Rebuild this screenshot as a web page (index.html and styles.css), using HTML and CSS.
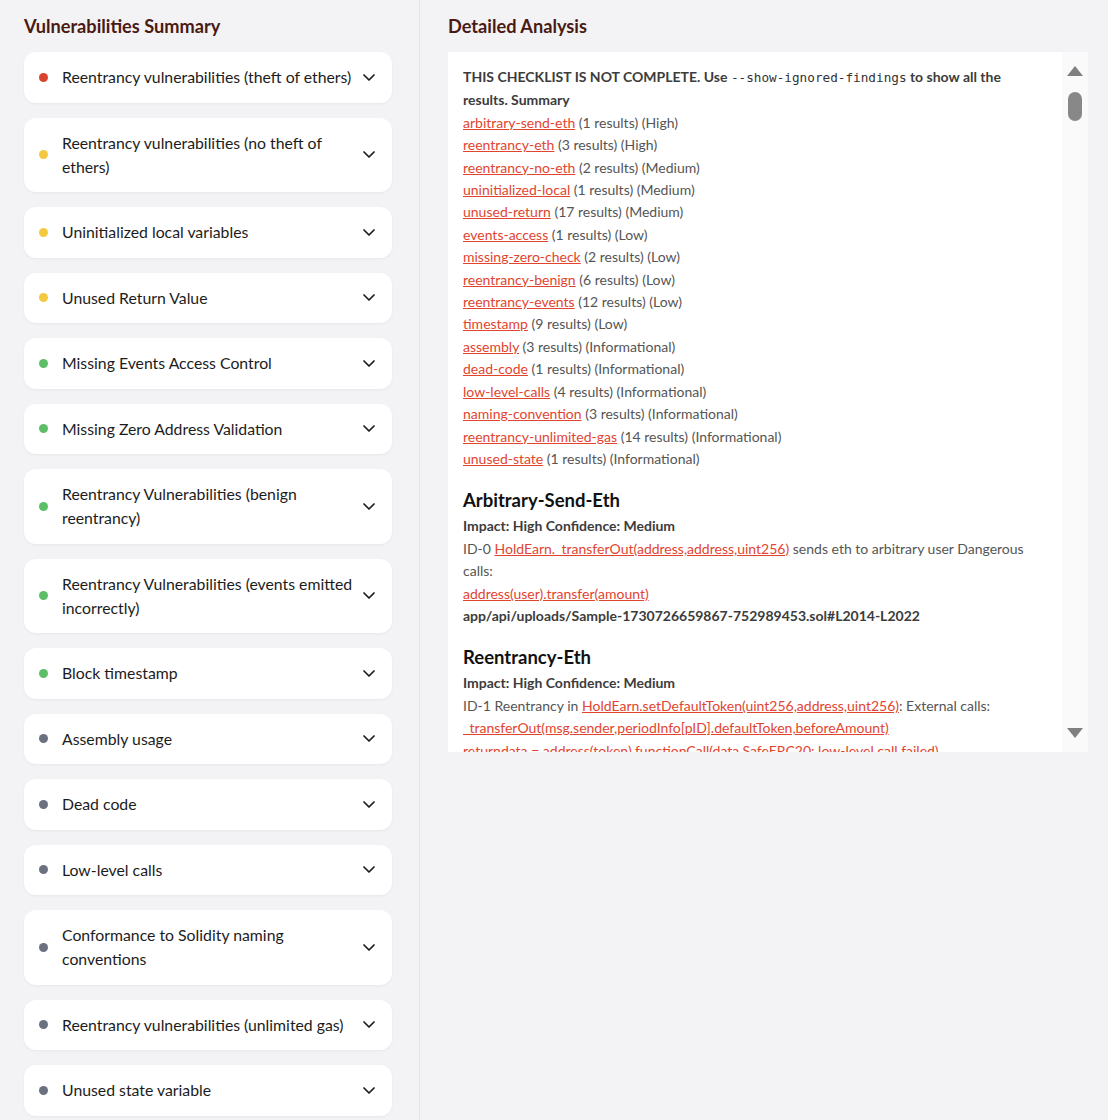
FILE: index.html
```html
<!DOCTYPE html>
<html lang="en">
<head>
<meta charset="utf-8">
<title>Analysis</title>
<link rel="stylesheet" href="styles.css">
</head>
<body>
<div class="page">
  <aside class="summary-col">
    <h2 class="col-title">Vulnerabilities Summary</h2>
    <div class="cards">
      <div class="card"><span class="dot red"></span><span class="card-text">Reentrancy vulnerabilities (theft of ethers)</span><svg class="chev" viewBox="0 0 12 7"><polyline points="1,1 6,6 11,1"/></svg></div>
      <div class="card"><span class="dot yellow"></span><span class="card-text">Reentrancy vulnerabilities (no theft of ethers)</span><svg class="chev" viewBox="0 0 12 7"><polyline points="1,1 6,6 11,1"/></svg></div>
      <div class="card"><span class="dot yellow"></span><span class="card-text">Uninitialized local variables</span><svg class="chev" viewBox="0 0 12 7"><polyline points="1,1 6,6 11,1"/></svg></div>
      <div class="card"><span class="dot yellow"></span><span class="card-text">Unused Return Value</span><svg class="chev" viewBox="0 0 12 7"><polyline points="1,1 6,6 11,1"/></svg></div>
      <div class="card"><span class="dot green"></span><span class="card-text">Missing Events Access Control</span><svg class="chev" viewBox="0 0 12 7"><polyline points="1,1 6,6 11,1"/></svg></div>
      <div class="card"><span class="dot green"></span><span class="card-text">Missing Zero Address Validation</span><svg class="chev" viewBox="0 0 12 7"><polyline points="1,1 6,6 11,1"/></svg></div>
      <div class="card"><span class="dot green"></span><span class="card-text">Reentrancy Vulnerabilities (benign reentrancy)</span><svg class="chev" viewBox="0 0 12 7"><polyline points="1,1 6,6 11,1"/></svg></div>
      <div class="card"><span class="dot green"></span><span class="card-text">Reentrancy Vulnerabilities (events emitted incorrectly)</span><svg class="chev" viewBox="0 0 12 7"><polyline points="1,1 6,6 11,1"/></svg></div>
      <div class="card"><span class="dot green"></span><span class="card-text">Block timestamp</span><svg class="chev" viewBox="0 0 12 7"><polyline points="1,1 6,6 11,1"/></svg></div>
      <div class="card"><span class="dot gray"></span><span class="card-text">Assembly usage</span><svg class="chev" viewBox="0 0 12 7"><polyline points="1,1 6,6 11,1"/></svg></div>
      <div class="card"><span class="dot gray"></span><span class="card-text">Dead code</span><svg class="chev" viewBox="0 0 12 7"><polyline points="1,1 6,6 11,1"/></svg></div>
      <div class="card"><span class="dot gray"></span><span class="card-text">Low-level calls</span><svg class="chev" viewBox="0 0 12 7"><polyline points="1,1 6,6 11,1"/></svg></div>
      <div class="card"><span class="dot gray"></span><span class="card-text">Conformance to Solidity naming conventions</span><svg class="chev" viewBox="0 0 12 7"><polyline points="1,1 6,6 11,1"/></svg></div>
      <div class="card"><span class="dot gray"></span><span class="card-text">Reentrancy vulnerabilities (unlimited gas)</span><svg class="chev" viewBox="0 0 12 7"><polyline points="1,1 6,6 11,1"/></svg></div>
      <div class="card"><span class="dot gray"></span><span class="card-text">Unused state variable</span><svg class="chev" viewBox="0 0 12 7"><polyline points="1,1 6,6 11,1"/></svg></div>
    </div>
  </aside>

  <main class="detail-col">
    <h2 class="col-title">Detailed Analysis</h2>
    <div class="panel">
      <div class="panel-body">
        <p class="intro">THIS CHECKLIST IS NOT COMPLETE. Use <code>--show-ignored-findings</code> to show all the results. Summary</p>
        <ul class="summary-list">
          <li><a href="#">arbitrary-send-eth</a> (1 results) (High)</li>
          <li><a href="#">reentrancy-eth</a> (3 results) (High)</li>
          <li><a href="#">reentrancy-no-eth</a> (2 results) (Medium)</li>
          <li><a href="#">uninitialized-local</a> (1 results) (Medium)</li>
          <li><a href="#">unused-return</a> (17 results) (Medium)</li>
          <li><a href="#">events-access</a> (1 results) (Low)</li>
          <li><a href="#">missing-zero-check</a> (2 results) (Low)</li>
          <li><a href="#">reentrancy-benign</a> (6 results) (Low)</li>
          <li><a href="#">reentrancy-events</a> (12 results) (Low)</li>
          <li><a href="#">timestamp</a> (9 results) (Low)</li>
          <li><a href="#">assembly</a> (3 results) (Informational)</li>
          <li><a href="#">dead-code</a> (1 results) (Informational)</li>
          <li><a href="#">low-level-calls</a> (4 results) (Informational)</li>
          <li><a href="#">naming-convention</a> (3 results) (Informational)</li>
          <li><a href="#">reentrancy-unlimited-gas</a> (14 results) (Informational)</li>
          <li><a href="#">unused-state</a> (1 results) (Informational)</li>
        </ul>

        <section class="finding">
          <h3>Arbitrary-Send-Eth</h3>
          <p class="impact">Impact: High Confidence: Medium</p>
          <p>ID-0 <a href="#">HoldEarn._transferOut(address,address,uint256)</a> sends eth to arbitrary user Dangerous calls:</p>
          <p><a href="#">address(user).transfer(amount)</a></p>
          <p class="path">app/api/uploads/Sample-1730726659867-752989453.sol#L2014-L2022</p>
        </section>

        <section class="finding">
          <h3>Reentrancy-Eth</h3>
          <p class="impact">Impact: High Confidence: Medium</p>
          <p>ID-1 Reentrancy in <a href="#">HoldEarn.setDefaultToken(uint256,address,uint256)</a>: External calls:</p>
          <p><a href="#">_transferOut(msg.sender,periodInfo[pID].defaultToken,beforeAmount)</a></p>
          <p><a href="#">returndata = address(token).functionCall(data,SafeERC20: low-level call failed)</a></p>
        </section>
      </div>
      <div class="scrollbar">
        <span class="arrow up"></span>
        <span class="thumb"></span>
        <span class="track-fill"></span>
        <span class="arrow down"></span>
      </div>
    </div>
  </main>
</div>
</body>
</html>
```

FILE: styles.css
```css
* { box-sizing: border-box; }

html, body {
  margin: 0;
  padding: 0;
  background: #f3f3f6;
  font-family: Lato, "Noto Sans", sans-serif;
  color: #1c1c1c;
}

.page {
  display: flex;
  height: 1120px;
  overflow: hidden;
}

.summary-col {
  width: 420px;
  flex: none;
  border-right: 1px solid #e3e3e8;
  padding: 16px 27px 0 24px;
}

.col-title {
  margin: 0 0 16px;
  font-size: 18.2px;
  line-height: 20px;
  font-weight: 700;
  color: #4a1a12;
}

.cards {
  display: flex;
  flex-direction: column;
  gap: 15px;
}

.card {
  display: flex;
  align-items: center;
  background: #fff;
  border-radius: 12px;
  padding: 13.25px 17px 13.25px 15px;
  box-shadow: 0 1px 3px rgba(20, 20, 40, 0.05);
}

.dot {
  flex: none;
  width: 9px;
  height: 9px;
  border-radius: 50%;
  margin-right: 14px;
}
.dot.red { background: #d9432e; }
.dot.yellow { background: #f4c93f; }
.dot.green { background: #5cbf68; }
.dot.gray { background: #6c717f; }

.card-text {
  flex: 1;
  font-size: 15.8px;
  line-height: 24px;
  color: #1c1c1c;
}

.chev {
  flex: none;
  width: 12px;
  height: 7px;
  margin-left: 6px;
  fill: none;
  stroke: #1c1c1c;
  stroke-width: 1.7;
  stroke-linecap: round;
  stroke-linejoin: round;
}

.detail-col {
  flex: 1;
  padding: 16px 20px 0 28px;
}

.panel {
  display: flex;
  height: 700px;
  background: #fff;
  overflow: hidden;
}

.panel-body {
  flex: 1;
  padding: 14px 27px 0 15px;
  overflow: hidden;
  font-size: 14px;
  line-height: 22.4px;
  color: #555;
}

.panel-body p {
  margin: 0;
}

.panel-body a {
  color: #e2452f;
  text-decoration: underline;
}

.intro {
  font-weight: 700;
  color: #3c3c3c;
}

.intro code {
  font-family: "DejaVu Sans Mono", "Liberation Mono", monospace;
  font-weight: 400;
  font-size: 12.7px;
  color: #333;
}

.summary-list {
  list-style: none;
  margin: 0;
  padding: 0;
}

.finding h3 {
  margin: 18px 0 3px;
  font-size: 18.5px;
  line-height: 24px;
  font-weight: 700;
  color: #111;
}

.impact,
.path {
  font-weight: 700;
  color: #3c3c3c;
}

.scrollbar {
  flex: none;
  width: 26px;
  background: #fafafa;
  display: flex;
  flex-direction: column;
  align-items: center;
  padding: 14px 0 14px;
}

.arrow {
  width: 0;
  height: 0;
  border-left: 8px solid transparent;
  border-right: 8px solid transparent;
}
.arrow.up { border-bottom: 10px solid #808080; }
.arrow.down { border-top: 10px solid #808080; }

.thumb {
  margin-top: 16px;
  width: 14px;
  height: 29px;
  border-radius: 7px;
  background: #888;
}

.track-fill { flex: 1; }
```
